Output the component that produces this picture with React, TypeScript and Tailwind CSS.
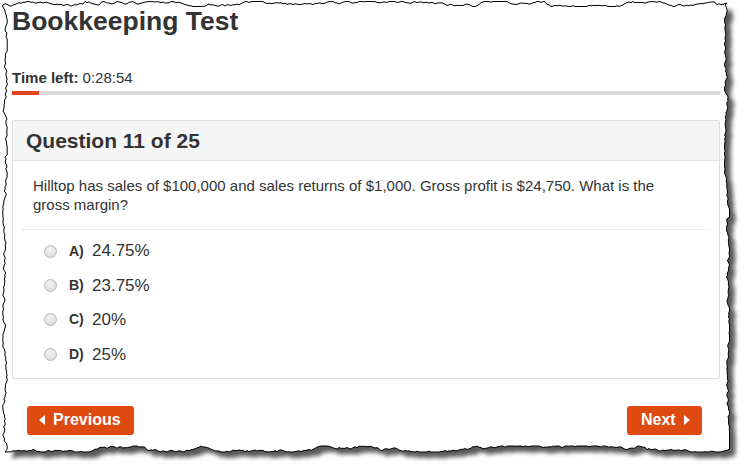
import React from "react";

// small seeded random so the torn edge is the same on every render
function seeded(seed: number) {
  let s = seed;
  return () => {
    s = (s * 16807) % 2147483647;
    return (s - 1) / 2147483646;
  };
}

function tornPath(): string {
  const r = seeded(91);
  const pts: string[] = [];
  let off = 0;
  const jitter = (amp: number) => {
    off += (r() - 0.5) * 2.6;
    if (r() > 0.93) off += (r() - 0.5) * 4;
    off = Math.max(-amp, Math.min(amp, off));
    return off;
  };
  for (let x = 5; x <= 727; x += 2) pts.push(`${x},${(4 + jitter(2.5)).toFixed(1)}`);
  for (let y = 5; y <= 449; y += 2) pts.push(`${(727 + jitter(2.5)).toFixed(1)},${y}`);
  for (let x = 727; x >= 5; x -= 2) pts.push(`${x},${(449 + jitter(3)).toFixed(1)}`);
  for (let y = 449; y >= 5; y -= 2) pts.push(`${(5 + jitter(2.2)).toFixed(1)},${y}`);
  return "M" + pts.join("L") + "Z";
}

const PAPER = tornPath();

const options = [
  { key: "A)", value: "24.75%" },
  { key: "B)", value: "23.75%" },
  { key: "C)", value: "20%" },
  { key: "D)", value: "25%" },
];

const Radio: React.FC = () => (
  <span className="block w-[13px] h-[13px] rounded-full border border-[#b9b9b9] bg-[radial-gradient(circle_at_45%_35%,#f4f4f4,#d4d4d4)]" />
);

export default function App() {
  return (
    <div className="relative w-[749px] h-[470px] overflow-hidden bg-white font-['Liberation_Sans',Arial,sans-serif] text-[#333]">
      <svg className="absolute inset-0" width="749" height="470" viewBox="0 0 749 470">
        <defs>
          <filter id="blur" x="-5%" y="-5%" width="110%" height="110%">
            <feGaussianBlur stdDeviation="2.2" />
          </filter>
        </defs>
        <path d={PAPER} transform="translate(6 6)" fill="#3c3c3c" opacity="0.85" filter="url(#blur)" />
        <path d={PAPER} fill="#fff" stroke="#000" strokeWidth="1" />
      </svg>

      <div className="relative pl-[12px] pr-[29px] pt-[6px]">
        <h1 className="text-[26.5px] leading-[30px] font-bold">Bookkeeping Test</h1>

        <div className="mt-[32px] text-[15px] leading-[20px]">
          <span className="font-bold">Time left:</span> 0:28:54
        </div>
        <div className="mt-[3px] h-[4px] bg-[#d8d8d8]">
          <div className="h-full w-[27px] bg-[#e5441b]" />
        </div>

        <div className="mt-[25px] border border-[#dedede] rounded-[2px]">
          <div className="bg-[#f5f5f5] border-b border-[#e3e3e3] pl-[13px] pt-[8px] pb-[7px]">
            <h2 className="text-[21px] leading-[24px] font-bold">Question 11 of 25</h2>
          </div>
          <p className="pl-[20px] pr-[50px] pt-[15px] text-[15px] leading-[19px]">
            Hilltop has sales of $100,000 and sales returns of $1,000. Gross profit is $24,750. What is the gross margin?
          </p>
          <div className="mx-[9px] mt-[15px] border-t border-dotted border-[#dcdcdc]" />
          <div className="pl-[31px] pt-[4px] pb-[6px]">
            {options.map((o) => (
              <label key={o.key} className="flex items-center h-[34.4px]">
                <Radio />
                <span className="ml-[12px] w-[23px] text-[14px] font-bold">{o.key}</span>
                <span className="text-[17px]">{o.value}</span>
              </label>
            ))}
          </div>
        </div>

        <div className="mt-[27px] flex justify-between pl-[15px] pr-[18px]">
          <button className="flex items-center h-[29px] w-[107px] pl-[12px] rounded-[3px] bg-[#df4a10] text-white text-[16px] font-bold">
            <svg width="6" height="10" viewBox="0 0 6 10" className="mr-[8px]">
              <polygon points="6,0 0,5 6,10" fill="#fff" />
            </svg>
            Previous
          </button>
          <button className="flex items-center h-[29px] w-[75px] pl-[14px] rounded-[3px] bg-[#df4a10] text-white text-[16px] font-bold">
            Next
            <svg width="6" height="10" viewBox="0 0 6 10" className="ml-[8px]">
              <polygon points="0,0 6,5 0,10" fill="#fff" />
            </svg>
          </button>
        </div>
      </div>
    </div>
  );
}
